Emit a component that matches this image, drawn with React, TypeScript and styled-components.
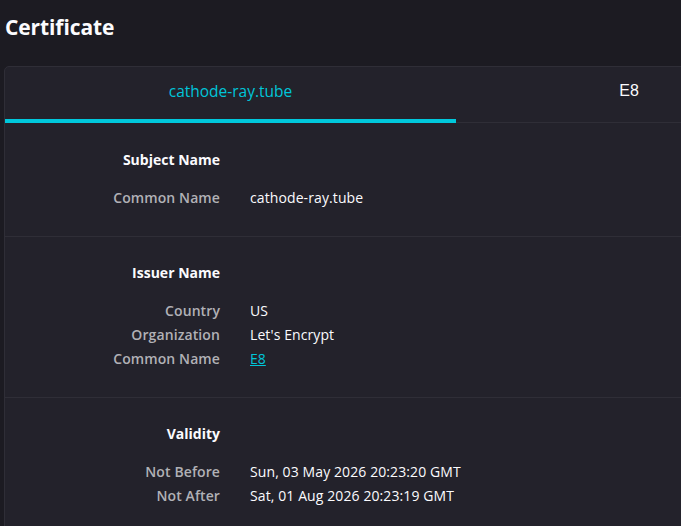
import React from "react";
import styled, { createGlobalStyle } from "styled-components";

const GlobalStyle = createGlobalStyle`
  html, body {
    margin: 0;
    padding: 0;
    background: #1c1b22;
    overflow: hidden;
  }
  body {
    font-family: "Open Sans", "Noto Sans", sans-serif;
    color: #fbfbfe;
  }
`;

type Field = { label: string; value: string; link?: boolean };
type Section = { title: string; fields: Field[] };

const sections: Section[] = [
  {
    title: "Subject Name",
    fields: [{ label: "Common Name", value: "cathode-ray.tube" }],
  },
  {
    title: "Issuer Name",
    fields: [
      { label: "Country", value: "US" },
      { label: "Organization", value: "Let's Encrypt" },
      { label: "Common Name", value: "E8", link: true },
    ],
  },
  {
    title: "Validity",
    fields: [
      { label: "Not Before", value: "Sun, 03 May 2026 20:23:20 GMT" },
      { label: "Not After", value: "Sat, 01 Aug 2026 20:23:19 GMT" },
    ],
  },
];

const App = () => {
  return (
    <Page>
      <GlobalStyle />
      <Title>Certificate</Title>
      <Card>
        <Tabs>
          <Tab $active $width={451}>cathode-ray.tube</Tab>
          <Tab $width={346} $plain>E8</Tab>
        </Tabs>
        {sections.map((s, i) => (
          <Block key={s.title} $first={i === 0} $last={i === sections.length - 1}>
            <Heading>{s.title}</Heading>
            <Rows>
              {s.fields.map((f) => (
                <React.Fragment key={f.label}>
                  <Label>{f.label}</Label>
                  {f.link ? <LinkValue href="#">{f.value}</LinkValue> : <Value>{f.value}</Value>}
                </React.Fragment>
              ))}
            </Rows>
          </Block>
        ))}
      </Card>
    </Page>
  );
};

const Page = styled.div`
  padding: 12px 0 0 4px;
`;

const Title = styled.h1`
  margin: 0 0 24px 1px;
  font-size: 21px;
  font-weight: 700;
  line-height: 30px;
  letter-spacing: -0.1px;
  color: #fbfbfe;
`;

const Card = styled.div`
  width: 800px;
  background: #23222b;
  border: 1px solid #2f2e37;
  border-radius: 5px;
`;

const Tabs = styled.div`
  display: flex;
  border-bottom: 1px solid #2f2e37;
`;

const Tab = styled.div<{ $active?: boolean; $width: number; $plain?: boolean }>`
  width: ${(p) => p.$width}px;
  height: 56px;
  box-sizing: border-box;
  padding-bottom: 4px;
  display: flex;
  align-items: center;
  justify-content: center;
  font-family: ${(p) => (p.$plain ? '"Liberation Sans", Arial, sans-serif' : "inherit")};
  font-size: ${(p) => (p.$plain ? "16px" : "15.5px")};
  color: ${(p) => (p.$active ? "#00c5d9" : "#fbfbfe")};
  border-bottom: 4px solid ${(p) => (p.$active ? "#00c8dc" : "transparent")};
  margin-bottom: -1px;
`;

const Block = styled.section<{ $first?: boolean; $last?: boolean }>`
  padding: ${(p) => (p.$first ? "26px" : "25px")} 0 26px;
  border-bottom: ${(p) => (p.$last ? "none" : "1px solid #2f2e37")};
`;

const Heading = styled.div`
  width: 215px;
  text-align: right;
  font-size: 14px;
  font-weight: 700;
  line-height: 22px;
  margin-bottom: 15px;
`;

const Rows = styled.div`
  display: grid;
  grid-template-columns: 215px 1fr;
  column-gap: 30px;
  font-size: 14px;
  line-height: 24px;
`;

const Label = styled.div`
  text-align: right;
  color: #b1b1b6;
  font-weight: 600;
  letter-spacing: 0.1px;
`;

const Value = styled.div`
  color: #fbfbfe;
  letter-spacing: 0.1px;
`;

const LinkValue = styled.a`
  color: #00c5d9;
  text-decoration: underline;
  justify-self: start;
`;

export default App;
